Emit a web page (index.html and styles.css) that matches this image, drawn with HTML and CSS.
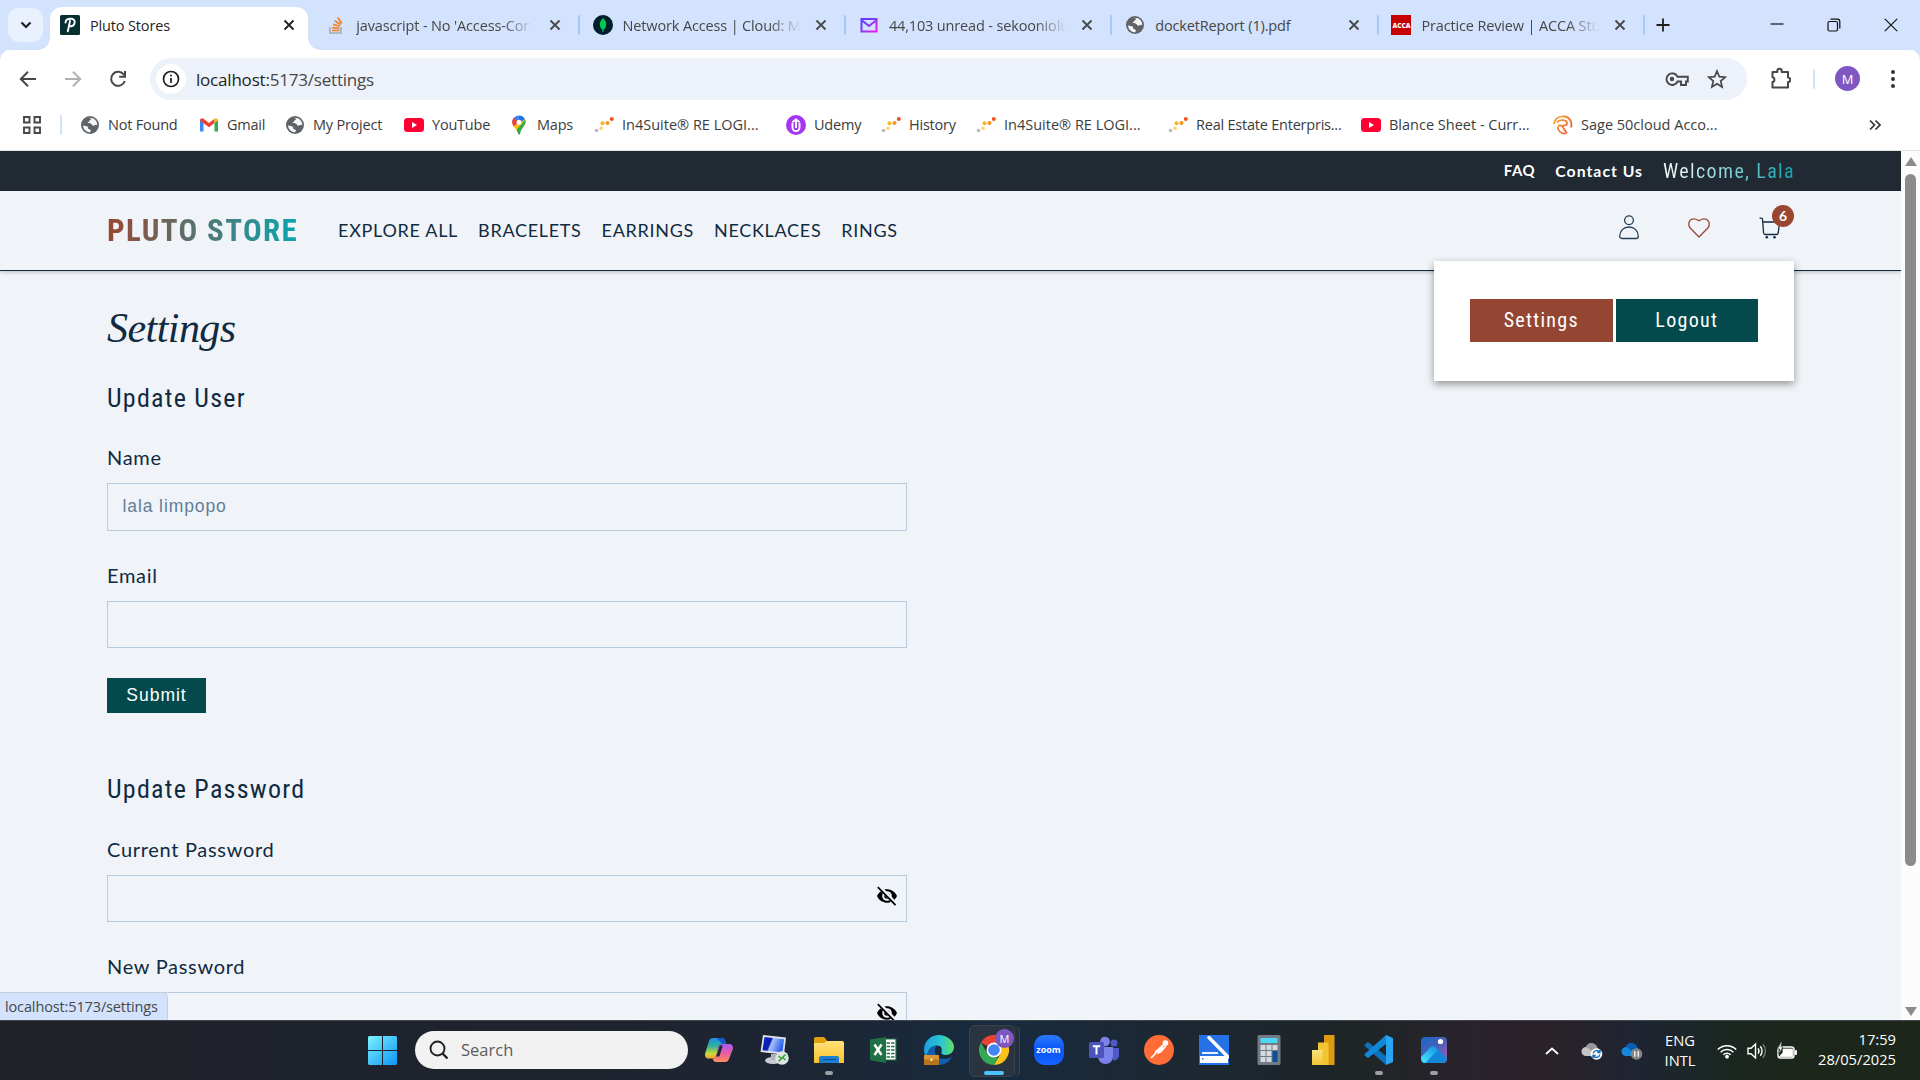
FILE: index.html
```html
<!DOCTYPE html>
<html lang="en">
<head>
<meta charset="utf-8">
<title>Pluto Stores</title>
<link rel="stylesheet" href="styles.css">
</head>
<body>
<svg class="sprite" aria-hidden="true">
  <defs>
    <linearGradient id="g-win" x1="0" y1="0" x2="1" y2="1"><stop offset="0" stop-color="#7cf2ff"/><stop offset="1" stop-color="#0c96f5"/></linearGradient>
    <linearGradient id="g-mail" x1="0" y1="0" x2="1" y2="1"><stop offset="0.3" stop-color="#6a3cff"/><stop offset="1" stop-color="#f01be8"/></linearGradient>
    <linearGradient id="g-sage" x1="0" y1="0" x2="1" y2="1"><stop offset="0" stop-color="#f8b13c"/><stop offset="1" stop-color="#e8502c"/></linearGradient>
    <linearGradient id="g-cop1" x1="0" y1="0" x2="0" y2="1"><stop offset="0" stop-color="#1c8fe8"/><stop offset=".4" stop-color="#2fb39a"/><stop offset=".75" stop-color="#c8d83a"/><stop offset="1" stop-color="#f8a22c"/></linearGradient>
    <linearGradient id="g-cop2" x1="0" y1="0" x2="0" y2="1"><stop offset="0" stop-color="#a45cf0"/><stop offset=".5" stop-color="#e85aa8"/><stop offset="1" stop-color="#ff9058"/></linearGradient>
    <linearGradient id="g-mon" x1="0" y1="0" x2="1" y2=".3"><stop offset="0" stop-color="#0a24c8"/><stop offset=".42" stop-color="#0a1fb0"/><stop offset=".5" stop-color="#a9c2ff"/><stop offset="1" stop-color="#2f62e8"/></linearGradient>
    <linearGradient id="g-fold" x1="0" y1="0" x2="0" y2="1"><stop offset="0" stop-color="#ffe27a"/><stop offset="1" stop-color="#fbc02d"/></linearGradient>
    <linearGradient id="g-edge" x1="0" y1="0" x2="1" y2="0"><stop offset="0" stop-color="#1b9de2"/><stop offset=".6" stop-color="#2fc8d0"/><stop offset="1" stop-color="#63e05a"/></linearGradient>
    <linearGradient id="g-zoom" x1="0" y1="0" x2="0" y2="1"><stop offset="0" stop-color="#2b7bff"/><stop offset=".5" stop-color="#0b53f5"/><stop offset="1" stop-color="#1565ff"/></linearGradient>
    <linearGradient id="g-pbi" x1="0" y1="0" x2="0" y2="1"><stop offset="0" stop-color="#f7e27c"/><stop offset="1" stop-color="#f2c531"/></linearGradient>
    <linearGradient id="g-photo" x1="0" y1="0" x2="1" y2="1"><stop offset="0" stop-color="#1668c4"/><stop offset=".5" stop-color="#4a5fb8"/><stop offset="1" stop-color="#b05ab8"/></linearGradient>
    <linearGradient id="g-hill" x1="0" y1="1" x2="1" y2="0"><stop offset="0" stop-color="#4be8ff"/><stop offset="1" stop-color="#1290e0"/></linearGradient>
    <symbol id="globe" viewBox="0 0 20 20"><circle cx="10" cy="10" r="9" fill="#5f6368"/><path d="M3 10.5c2 .2 3.6.4 4.800 1.300 .8.7 0 1.500.7 2.200.9.6 2.300.5 2.400 1.600 0 .8-.8 1.200-1 2A7.400 7.400 0 0 1 3 10.500zM8.500 2.800c1 .6 2.600.3 2.500 1.500-.2 1-1.800.7-1.900 1.900 0 1-1.500.6-1.400 1.700.2.900 2.300.3 3.300.8 1.200.6 1 2 2.400 2.100 1.200 0 1.300-1.100 2.500-1 .7 0 1 .4 1.400.6C17.600 6 14 2.300 8.500 2.800z" fill="#f4f6fa"/></symbol>
    <symbol id="dots" viewBox="0 0 20 20"><circle cx="2.500" cy="15.500" r="1.800" fill="#b4b8c8"/><circle cx="7" cy="13.200" r="1.800" fill="#fbd56a"/><circle cx="8.500" cy="8.200" r="2" fill="#f9b51e"/><circle cx="13.500" cy="8" r="2" fill="#f7931e"/><circle cx="17.800" cy="4" r="2" fill="#f4511e"/></symbol>
    <symbol id="youtube" viewBox="0 0 20 20"><rect x="0" y="3" width="20" height="14" rx="3.500" fill="#ff0033"/><path d="M8 7l5 3-5 3z" fill="#fff"/></symbol>
    <symbol id="x" viewBox="0 0 12 12"><path d="M1.500 1.500l9 9M10.500 1.500l-9 9" fill="none" stroke="currentColor" stroke-width="1.800"/></symbol>
    <symbol id="eye-off" viewBox="0 0 22 20"><path d="M1 10C3 5.500 7 3.200 11 3.200S19 5.500 21 10c-2 4.500-6 6.800-10 6.800S3 14.500 1 10z" fill="#000"/><circle cx="11" cy="10" r="4.800" fill="#f0f4f8"/><circle cx="11" cy="10" r="2.800" fill="#000"/><path d="M3.200.800l17 17.500" stroke="#f0f4f8" stroke-width="4"/><path d="M1.800 1.200l17.800 18" stroke="#000" stroke-width="1.700"/></symbol>
  </defs>
</svg>

<div class="screen">
  <header class="tabstrip">
    <button class="tab-search"><svg width="12" height="8" viewBox="0 0 12 8"><path d="M1.500 1.500L6 6l4.500-4.500" fill="none" stroke="#1f1f1f" stroke-width="2.200"/></svg></button>
    <div class="tab active">
      <svg class="fav" viewBox="0 0 20 20"><rect width="20" height="20" rx="1.500" fill="#06302f"/><path d="M5.500 7.500C5.500 4.500 8.500 3.600 11 3.800c3 .2 4.200 2 3.500 4.400C13.800 10.600 11.500 11.700 8.800 11M10 6L7.800 16.200" fill="none" stroke="#fff" stroke-width="1.900" stroke-linecap="round"/></svg>
      <span class="title">Pluto Stores</span><svg class="close"><use href="#x"/></svg>
    </div>
    <div class="tab">
      <svg class="fav" viewBox="0 0 20 20"><path d="M4 12v6h11v-6" fill="none" stroke="#a9adb3" stroke-width="1.600"/><path d="M6 15.500h7.500M6.200 12.600l7.300.9M7 9.300l6.900 2.200M8.800 5.800l5.900 3.900M11.800 2.500l4 6" stroke="#f48024" stroke-width="1.700"/></svg>
      <span class="title fade">javascript - No 'Access-Cor</span><svg class="close"><use href="#x"/></svg><i class="sep"></i>
    </div>
    <div class="tab">
      <svg class="fav" viewBox="0 0 20 20"><circle cx="10" cy="10" r="10" fill="#001e2b"/><path d="M10 3c2.600 2.500 3.400 4.500 3.200 7-.2 2.400-1.400 3.800-2.700 5v2h-1v-2c-1.300-1.200-2.500-2.600-2.700-5C6.600 7.500 7.600 5.500 10 3z" fill="#00c853"/></svg>
      <span class="title fade">Network Access | Cloud: Mo</span><svg class="close"><use href="#x"/></svg><i class="sep"></i>
    </div>
    <div class="tab">
      <svg class="fav" viewBox="0 0 20 20"><path d="M2.500 4h15v12.500h-15z M3 5.500l7 5.500 7-5.500" fill="none" stroke="url(#g-mail)" stroke-width="2"/></svg>
      <span class="title fade">44,103 unread - sekooniolu</span><svg class="close"><use href="#x"/></svg><i class="sep"></i>
    </div>
    <div class="tab">
      <svg class="fav"><use href="#globe"/></svg>
      <span class="title">docketReport (1).pdf</span><svg class="close"><use href="#x"/></svg><i class="sep"></i>
    </div>
    <div class="tab">
      <span class="fav acca">ACCA</span>
      <span class="title fade">Practice Review | ACCA Stu</span><svg class="close"><use href="#x"/></svg><i class="sep"></i>
    </div>
    <svg class="newtab" width="14" height="14" viewBox="0 0 14 14"><path d="M7 .5v13M.5 7h13" stroke="#1f1f1f" stroke-width="1.800"/></svg>
    <div class="winctl">
      <svg width="14" height="14" viewBox="0 0 14 14"><path d="M.5 6h13" stroke="#111" stroke-width="1.200"/></svg>
      <svg width="14" height="14" viewBox="0 0 14 14"><rect x="1" y="3.500" width="9.500" height="9.500" rx="1.500" fill="none" stroke="#111" stroke-width="1.200"/><path d="M3.500 1.200h7a2.300 2.300 0 0 1 2.300 2.300v7" fill="none" stroke="#111" stroke-width="1.200"/></svg>
      <svg width="14" height="14" viewBox="0 0 14 14"><path d="M.8.800l12.400 12.400M13.200.800L.8 13.200" stroke="#111" stroke-width="1.200"/></svg>
    </div>
  </header>

  <div class="toolbar">
    <svg class="nav-ic" viewBox="0 0 18 18"><path d="M17 9H2M9 1.800L1.800 9 9 16.200" fill="none" stroke="#474747" stroke-width="2"/></svg>
    <svg class="nav-ic" viewBox="0 0 18 18"><path d="M1 9h15M9 1.800L16.200 9 9 16.200" fill="none" stroke="#b1b1b1" stroke-width="2"/></svg>
    <svg class="nav-ic reload" viewBox="0 0 18 18"><path d="M15 5A7 7 0 1 0 15.800 11M16 1v5.800h-5.800" fill="none" stroke="#474747" stroke-width="2"/></svg>
    <div class="omnibox">
      <span class="info"><svg width="18" height="18" viewBox="0 0 18 18"><circle cx="9" cy="9" r="7.500" fill="none" stroke="#1f1f1f" stroke-width="1.700"/><path d="M9 8v5M9 4.800v1.800" stroke="#1f1f1f" stroke-width="1.700"/></svg></span>
      <span class="url"><b>localhost:</b>5173/settings</span>
      <svg class="key" width="24" height="16" viewBox="0 0 24 16"><path d="M12.600 5.800A5.800 5.800 0 1 0 12.600 10.500H16v3.500h5v-3.500h1.800V5.800z" fill="none" stroke="#474747" stroke-width="1.900"/><circle cx="7" cy="8" r="2.200" fill="#474747"/></svg>
      <svg class="star" width="20" height="20" viewBox="0 0 20 20"><path d="M10 2l2.300 5.600 6 .5-4.600 3.900 1.400 5.900L10 14.800 4.900 17.900l1.400-5.900L1.700 8.100l6-.5z" fill="none" stroke="#474747" stroke-width="1.700"/></svg>
    </div>
    <svg class="ext" width="20" height="22" viewBox="0 0 20 22"><path d="M1.500 5h4.800V4a2 2 0 0 1 4.400 0v1H17v5.500a2.300 2.300 0 0 1 0 4.600v5.400H1.500V15a2.400 2.400 0 0 0 0-4.700z" fill="none" stroke="#474747" stroke-width="2" stroke-linejoin="round"/></svg>
    <i class="vsep"></i>
    <span class="avatar">M</span>
    <svg class="kebab" width="6" height="20" viewBox="0 0 6 20"><g fill="#333"><circle cx="3" cy="3" r="2"/><circle cx="3" cy="10" r="2"/><circle cx="3" cy="17" r="2"/></g></svg>
  </div>

  <nav class="bookmarks">
    <svg class="apps" width="18" height="18" viewBox="0 0 18 18"><path d="M1 1h5.500v5.500H1zM11.500 1H17v5.500h-5.500zM1 11.500h5.500V17H1zM11.500 11.500H17V17h-5.500z" fill="none" stroke="#474747" stroke-width="1.900"/></svg>
    <i class="vsep"></i>
    <div class="marks">
      <a><svg><use href="#globe"/></svg><span>Not Found</span></a>
      <a><svg viewBox="0 0 20 20"><path d="M1 16.500V5l3.500 2.500v9z" fill="#4285f4"/><path d="M19 16.500V5l-3.500 2.500v9z" fill="#34a853"/><path d="M1 5.500C1 3 3.500 2.800 4.500 3.800L10 8l5.500-4.200V8L10 12.300 1 5.800z" fill="#ea4335"/><path d="M15.500 3.800C17 2.600 19 3.500 19 5.500L15.500 8.200z" fill="#fbbc04"/></svg><span>Gmail</span></a>
      <a><svg><use href="#globe"/></svg><span>My Project</span></a>
      <a><svg><use href="#youtube"/></svg><span>YouTube</span></a>
      <a><svg viewBox="0 0 20 20"><path d="M3.200 7.500A6.800 6.800 0 0 1 10 .5v7z" fill="#4285f4"/><path d="M3.200 7.500C3.200 5.500 4 3.800 5 2.800L10 7.500 4.600 11.500C3.700 10.200 3.200 9 3.200 7.500z" fill="#ea4335"/><path d="M10 .5a6.800 6.800 0 0 1 6 3.800L10 9z" fill="#1a73e8"/><path d="M4.600 11.500L16 4.200c2 5-2 7.300-3.800 10.500L8.400 16C7.200 14 5.600 13 4.600 11.500z" fill="#fbbc04"/><path d="M16.200 4.600c1.900 5.400-4 8-5 13.900-.4 1.500-2 1.500-2.300 0C8.700 17 8 16 7.500 15z" fill="#34a853"/><circle cx="10" cy="7.300" r="2.500" fill="#fff"/></svg><span>Maps</span></a>
      <a class="wide"><svg><use href="#dots"/></svg><span>In4Suite® RE LOGI...</span></a>
      <a><svg viewBox="0 0 20 20"><circle cx="10" cy="10" r="10" fill="#a435f0"/><path d="M6.500 8v4.500a3.500 3.500 0 0 0 7 0V8M6.300 7.300L10 4.500l3.700 2.800M10 6v7" fill="none" stroke="#fff" stroke-width="1.900"/></svg><span>Udemy</span></a>
      <a><svg><use href="#dots"/></svg><span>History</span></a>
      <a class="wide"><svg><use href="#dots"/></svg><span>In4Suite® RE LOGI...</span></a>
      <a><svg><use href="#dots"/></svg><span>Real Estate Enterpris...</span></a>
      <a class="wide"><svg><use href="#youtube"/></svg><span>Blance Sheet - Curr...</span></a>
      <a class="wide"><svg viewBox="0 0 20 20"><path d="M1 9C1.500 3.500 7 .5 12 1.500c5 1 7.500 6 6 11M4 7.500C6 4.500 13.500 4 14 8c.2 3.500-6 2.500-9 2.500M9 11l5 7.500M4.500 11.500C5 16 8 18.500 12.500 18.800" fill="none" stroke="url(#g-sage)" stroke-width="1.800"/></svg><span>Sage 50cloud Acco...</span></a>
    </div>
    <svg class="more" width="12" height="12" viewBox="0 0 12 12"><path d="M1 1.500L5.500 6 1 10.500M6.500 1.500L11 6l-4.500 4.500" fill="none" stroke="#333" stroke-width="1.700"/></svg>
  </nav>

  <div class="viewport">
    <div class="page">
      <div class="topbar">
        <a class="link faq">FAQ</a><a class="link">Contact Us</a><span class="welcome">Welcome, Lala</span>
      </div>
      <div class="site-head">
        <span class="logo">PLUTO STORE</span>
        <nav class="menu"><a>EXPLORE ALL</a><a>BRACELETS</a><a>EARRINGS</a><a>NECKLACES</a><a>RINGS</a></nav>
        <div class="actions">
          <svg width="20" height="25" viewBox="0 0 20 25"><circle cx="10" cy="5.300" r="4.400" fill="none" stroke="#243b53" stroke-width="1.300"/><path d="M3 23.500c-1.300 0-2.300-.9-2.300-2.200C.8 16 4.500 12 10 12s9.200 4 9.300 9.300c0 1.300-1 2.200-2.300 2.200z" fill="none" stroke="#243b53" stroke-width="1.300"/></svg>
          <svg width="22" height="20" viewBox="0 0 22 20"><path d="M11 19L2.400 10.200C-.6 6.800.8 1 5.800.8 8.500.6 10 2.300 11 2.800 12 2.300 13.500.6 16.200.8c5 .2 6.400 6 3.400 9.400z" fill="none" stroke="#994733" stroke-width="1.300"/></svg>
          <div class="cart">
            <svg width="22" height="22" viewBox="0 0 22 22"><path d="M.5 1.200h1.700c.9 0 1.200.4 1.300 1.200L4.600 16c.1 1 .7 1.500 1.600 1.500h11.300c.9 0 1.500-.5 1.700-1.400L20.600 5H3.800" fill="none" stroke="#102a42" stroke-width="1.300"/><circle cx="7.800" cy="20.300" r="1.300" fill="#102a42"/><circle cx="15.500" cy="20.300" r="1.300" fill="#102a42"/></svg>
            <span class="badge">6</span>
          </div>
          <div class="dropdown"><button class="btn rust"><span>Settings</span></button><button class="btn teal"><span>Logout</span></button></div>
        </div>
      </div>
      <main class="content">
        <h1><span>Settings</span></h1>
        <h2 class="h-user"><span>Update User</span></h2>
        <form class="form user-form">
          <label>Name</label>
          <div class="field tall"><span class="ph">lala limpopo</span></div>
          <label>Email</label>
          <div class="field"></div>
          <button class="submit" type="button">Submit</button>
        </form>
        <h2 class="h-pass"><span>Update Password</span></h2>
        <form class="form">
          <label>Current Password</label>
          <div class="field"><svg class="eye"><use href="#eye-off"/></svg></div>
          <label>New Password</label>
          <div class="field"><svg class="eye"><use href="#eye-off"/></svg></div>
        </form>
      </main>
    </div>
    <div class="scroll"><i class="up"></i><i class="thumb"></i><i class="down"></i></div>
    <div class="status"><span>localhost:5173/settings</span></div>
  </div>

  <footer class="taskbar">
    <div class="tb-main">
      <svg class="start" width="29" height="29" viewBox="0 0 29 29"><path d="M1 0h13v14H0V1zM15 0h13l1 1v13H15zM0 15h14v14H1l-1-1zM15 15h14v13l-1 1H15z" fill="url(#g-win)"/></svg>
      <div class="tb-search"><svg width="20" height="20" viewBox="0 0 20 20"><circle cx="8.500" cy="8.500" r="7" fill="none" stroke="#222" stroke-width="1.900"/><path d="M13.500 13.500l5 5" stroke="#222" stroke-width="2.400"/></svg><span>Search</span></div>
      <div class="apps-row">
        <div class="app"><svg viewBox="0 0 30 30"><path d="M9 3h9c2 0 2.800 1.500 3.300 3.500L22 9h-4c-2 0-3 1-3.500 3l-2.300 8.500c-.6 2-1.600 3-3.500 3H4.500C1.500 23.500.5 21 1.300 18L5 6c.6-2 2-3 4-3z" fill="url(#g-cop1)"/><path d="M18 3c2 0 2.800 1.500 3.300 3.500L22 9h-4l-5-6z" fill="#1858c8"/><path d="M21 27h-9c-2 0-2.800-1.500-3.300-3.500 2 0 3-1 3.500-3l2.300-8.500c.6-2 1.600-3 3.500-3h7.500c3 0 4 2.500 3.200 5.500L25 24c-.6 2-2 3-4 3z" fill="url(#g-cop2)"/><path d="M15.800 10.500h3l-3.500 11h-3z" fill="#1e2431"/></svg></div>
        <div class="app"><svg viewBox="0 0 30 30"><ellipse cx="14" cy="25.500" rx="8" ry="3.500" fill="#c9ccd2"/><path d="M12 19h5v6h-5z" fill="#aeb2ba"/><path d="M4 0l23 2.500-2 17L1.500 17z" fill="#dfe2e8"/><path d="M5.500 2L25 4.200l-1.500 13.300L3.500 15.300z" fill="url(#g-mon)"/><circle cx="23" cy="23" r="6.800" fill="#dfe3e2"/><path d="M19.500 21l3 2.500-3 3M26.500 19.500l-3 3 3 2.500" fill="none" stroke="#2fa32f" stroke-width="1.500"/></svg></div>
        <div class="app run"><svg viewBox="0 0 30 30"><path d="M0 4c0-1.200.8-2 2-2h8l3 3.500V12H0z" fill="#e0a010"/><path d="M0 8h10l3-2h15c1.200 0 2 .8 2 2v20H1c-.6 0-1-.4-1-1z" fill="url(#g-fold)"/><path d="M5 28v-5c0-1.200.8-2 2-2h16c1.200 0 2 .8 2 2v5z" fill="#1b7fd0"/><path d="M8.500 24.500h13" stroke="#0b4f94" stroke-width="1.200"/></svg></div>
        <div class="app"><svg viewBox="0 0 30 30"><path d="M14 4h13v21H14z" fill="#fff" stroke="#1e7145" stroke-width="1.200"/><path d="M17.500 8h8M17.500 11.500h8M17.500 15h8M17.500 18.500h8M17.500 22h8" stroke="#1e7145" stroke-width="1.500"/><path d="M21.500 5v19" stroke="#fff"/><path d="M1 4.500L17 2v26L1 25.200z" fill="#1e7145"/><path d="M5.500 9.500l7 10.500M12.500 9.500L5.500 20" stroke="#fff" stroke-width="2.400"/></svg></div>
        <div class="app"><svg viewBox="0 0 30 30"><path d="M0 15C0 6 7 0 15 0s15 6 15 12c0 5-4 8-8.500 8-3 0-4.500-1-4-3 1-3 0-6.500-4.500-6.500C7 10.500 3 16 3 22 1 20 0 18 0 15z" fill="url(#g-edge)"/><path d="M3 22c0-6 4-11.500 10-11.500C8.500 15 11 24 20 24c3.500 0 6-1 8-2.500C25.500 27 20.500 30 15 30 9 30 4.500 27 3 22z" fill="#0f5fae"/><path d="M0 20h15v10H0z" fill="#b8741a"/><path d="M0 20h15v4.500H0z" fill="#d99434"/><path d="M6.500 23.500h2v2.500h-2z" fill="#fff0a0"/></svg></div>
        <div class="app chrome"><svg viewBox="0 0 30 30"><path d="M15 15L2 7.500A15 15 0 0 1 28 7.500H15z" fill="#ea4335"/><path d="M15 7.500H28A15 15 0 0 1 15 30l6.500-11.300z" fill="#fbc116"/><path d="M2 7.500L8.500 18.700 15 22.500h4.300L15 30A15 15 0 0 1 2 7.500z" fill="#34a853"/><circle cx="15" cy="15" r="7.500" fill="#fff"/><circle cx="15" cy="15" r="5.800" fill="#4285f4"/></svg><span class="m-badge">M</span></div>
        <div class="app"><svg viewBox="0 0 30 30"><rect width="30" height="30" rx="11" fill="url(#g-zoom)"/></svg><span class="zoom">zoom</span></div>
        <div class="app"><svg viewBox="0 0 30 30"><circle cx="25" cy="8" r="3.500" fill="#5059c9"/><path d="M22 13h8v7c0 4-3 5.500-6 5.500z" fill="#5059c9"/><circle cx="16" cy="6.500" r="4.800" fill="#7b83eb"/><path d="M9 12h15v9c0 5-3.500 8-7.500 8S9 26 9 21z" fill="#7b83eb"/><rect x="0" y="7" width="15" height="16" rx="1.500" fill="#4b53bc"/><path d="M3.800 11.300h7.400M7.500 11v8.500" stroke="#fff" stroke-width="2"/></svg></div>
        <div class="app"><svg viewBox="0 0 30 30"><circle cx="15" cy="15" r="15" fill="#ff6c37"/><circle cx="21.500" cy="8" r="2.800" fill="#fff"/><path d="M20 9.500l-8 7-1 2.500-4 4M19 12l-5 5M22 10.500l-5 6-4 2" stroke="#fff" stroke-width="1.700" fill="none"/></svg></div>
        <div class="app"><svg viewBox="0 0 30 30"><path d="M0 0h30v30H0z" fill="#2670e8"/><path d="M10 2.500L29 22" stroke="#fff" stroke-width="3.400" stroke-linecap="round"/><path d="M3 18h16" stroke="#fff" stroke-width="1.800"/><path d="M1 21h28v7H1z" fill="#fff"/><path d="M3 23h1.500v1.500H3z" fill="#2670e8"/></svg></div>
        <div class="app"><svg viewBox="0 0 30 30"><rect x="3.500" width="23" height="30" rx="1.500" fill="#737b85"/><path d="M6.500 3h17v5h-17z" fill="#4cd8f5"/><path d="M6.500 10h5v5h-5zM12.500 10h5v5h-5zM18.500 10h5v5h-5zM6.500 16h5v5h-5zM12.500 16h5v5h-5zM6.500 22h5v5h-5zM12.500 22h5v5h-5z" fill="#d6dade"/><path d="M18.500 16h5v11h-5z" fill="#0d4f94"/></svg></div>
        <div class="app"><svg viewBox="0 0 30 30"><path d="M15 0h10.500v30H15z" fill="#dc9b10"/><path d="M9 7.500h10.500V30H9z" fill="#f2c531"/><path d="M3 15h10.500v15H3z" fill="url(#g-pbi)"/></svg></div>
        <div class="app run"><svg viewBox="0 0 30 30"><path d="M22 0l7 3v24l-7 3z" fill="#29a5f2"/><path d="M2 8.500l2-1.500L22 21v9L1 11.200c-.8-.8-.8-1.800 1-2.700z" fill="#0b72bd"/><path d="M2 21.500L4 23l18-14V0L1 18.800c-.8.800-.8 1.800 1 2.700z" fill="#1288d8"/></svg></div>
        <div class="app run"><svg viewBox="0 0 30 30"><rect x="2" y="2" width="26" height="26" rx="4" fill="url(#g-photo)"/><path d="M2 22l9.500-9.500c1.700-1.700 3.800-1.700 5.500 0L28 23c0 3-1.800 5-4 5H6c-2.400 0-4-2-4-6z" fill="#1487d8"/><path d="M2 22l9.500-9.500c1.700-1.700 3.800-1.700 5.500 0L19 14.500 6.500 28C3.800 28 2 26 2 22z" fill="url(#g-hill)"/><circle cx="21.500" cy="6.500" r="2.600" fill="#fff"/></svg></div>
      </div>
    </div>
    <div class="tray">
      <svg width="14" height="8" viewBox="0 0 14 8"><path d="M1 7l6-5.500L13 7" fill="none" stroke="#fff" stroke-width="1.700"/></svg>
      <svg class="c1" width="22" height="18" viewBox="0 0 22 18"><path d="M5 14a4.500 4.500 0 0 1 0-9C6 2 9 .500 12 1.500c2.500.8 4 2.500 4.500 5 2 .5 3 2 3 4 0 2.200-1.500 3.500-3.500 3.500z" fill="#c4c4c6"/><path d="M5 5c1-3 4-4.500 7-3.500 2.500.8 4 2.500 4.500 5L11 9z" fill="#98989c"/><circle cx="15.500" cy="12" r="5.800" fill="#fff"/><path d="M12.200 11.500a3.500 3.500 0 0 1 6.300-1.500M18.800 12.500a3.500 3.500 0 0 1-6.300 1.500M19 7.800v2.700h-2.700M12 16.200v-2.700h2.700" fill="none" stroke="#0f6cbd" stroke-width="1.400"/></svg>
      <svg class="c2" width="22" height="18" viewBox="0 0 22 18"><path d="M5 14a4.500 4.500 0 0 1 0-9C6 2 9 .500 12 1.500c2.500.8 4 2.500 4.500 5 2 .5 3 2 3 4 0 2.200-1.500 3.500-3.500 3.500z" fill="#1687dc"/><path d="M5 5c1-3 4-4.500 7-3.500 2.500.8 4 2.500 4.500 5L11 9z" fill="#0a5fb4"/><circle cx="15.500" cy="12" r="5.800" fill="#858585"/><path d="M13.800 9.300v5.400M17.200 9.300v5.400" stroke="#fff" stroke-width="1.300"/></svg>
      <div class="lang"><span>ENG</span><span>INTL</span></div>
      <svg class="wifi" width="20" height="16" viewBox="0 0 20 16"><g fill="none" stroke="#fff" stroke-width="1.500"><path d="M.8 6.500a13 13 0 0 1 18.400 0M3.600 9.200a9 9 0 0 1 12.800 0M6.300 11.800a5.200 5.200 0 0 1 7.400 0"/></g><circle cx="10" cy="13.700" r="1.900" fill="#fff"/></svg>
      <svg class="vol" width="20" height="18" viewBox="0 0 20 18"><g fill="none" stroke="#fff" stroke-width="1.400"><path d="M1 6.200h3L8.500 2v14L4 11.800H1zM11 6.300c1.200 1.600 1.200 3.800 0 5.400M13.300 4.300c2.300 2.700 2.300 6.700 0 9.400"/><path d="M15.800 2.200c3.500 4 3.500 9.600 0 13.600" stroke="#777"/></g></svg>
      <svg class="bat" width="22" height="18" viewBox="0 0 22 18"><rect x="2" y="5" width="16" height="11" rx="2.500" fill="none" stroke="#fff" stroke-width="1.400"/><path d="M7 7h9.500v7.500h-13l3.500-4zM19 8.500h1.500v4H19z" fill="#fff" stroke="#fff" stroke-width=".8"/><path d="M5 0L1.500 7h2.300L2.800 12 7 5H4.800L6 0z" fill="#fff" stroke="#1d2822" stroke-width=".6"/></svg>
      <div class="clock"><span>17:59</span><span>28/05/2025</span></div>
    </div>
  </footer>
</div>
</body>
</html>
```
FILE: styles.css
```css
* { box-sizing: border-box; }
body { margin: 0; overflow: hidden; background: #fff; }
button { border: 0; padding: 0; margin: 0; font: inherit; color: inherit; background: none; }
.sprite { position: absolute; width: 0; height: 0; }
svg { display: block; flex: none; }

.screen {
  width: 1920px; height: 1080px; display: flex; flex-direction: column;
  font-family: "Open Sans", "Noto Sans", sans-serif; overflow: hidden;
  background: linear-gradient(#d3e2fd 60px, #fff 60px);
}

/* browser tabs */
.tabstrip { height: 50px; flex: none; background: #d3e2fd; display: flex; align-items: center; padding-left: 8px; }
.tab-search { width: 35px; height: 34px; border-radius: 11px; background: #e9f1fe; display: flex; align-items: center; justify-content: center; margin-right: 7px; }
.tab { width: 266.300px; height: 50px; flex: none; display: flex; align-items: center; padding-left: 10px; position: relative; color: #474747; }
.tab.active { color: #1f1f1f; isolation: isolate; }
.tab.active::before { content: ""; position: absolute; z-index: -1; left: 0; top: 7px; width: 258px; height: 43px; background: #fff; border-radius: 12px 12px 0 0; }
.tab.active::after { content: ""; position: absolute; z-index: -1; left: -12px; bottom: 0; width: 282px; height: 12px;
  background: radial-gradient(circle at 0 0, transparent 11.500px, #fff 12px) left / 12px 12px no-repeat, radial-gradient(circle at 100% 0, transparent 11.500px, #fff 12px) right / 12px 12px no-repeat; }
.fav { width: 20px; height: 20px; flex: none; margin-right: 10px; }
.acca { background: #c60000; color: #fff; font-size: 6.500px; font-weight: 800; display: flex; align-items: center; justify-content: center; }
.title { width: 178px; font-size: 14.500px; letter-spacing: -0.150px; white-space: nowrap; overflow: hidden; }
.fade { -webkit-mask-image: linear-gradient(90deg, #000 82%, transparent); mask-image: linear-gradient(90deg, #000 82%, transparent); }
.close { width: 12px; height: 12px; margin-left: 14.500px; }
.sep { width: 2px; height: 20px; background: #a8c7fa; border-radius: 1px; margin-left: 17px; }
.newtab { margin-left: 8px; }
.winctl { margin-left: auto; display: flex; gap: 43px; padding-right: 22px; }

/* toolbar */
.toolbar { height: 50px; flex: none; display: flex; align-items: center; padding: 8px 24px 0 19px; background: #fff; border-radius: 10px 10px 0 0; }
.nav-ic { width: 18px; height: 18px; margin-right: 27px; }
.nav-ic.reload { margin-right: 23px; }
.omnibox { width: 1597px; height: 42px; border-radius: 21px; background: #ecf1fa; display: flex; align-items: center; padding: 0 20px 0 6px; }
.info { width: 30px; height: 30px; border-radius: 50%; background: #fff; display: flex; align-items: center; justify-content: center; margin-right: 10px; }
.url { font-size: 17px; letter-spacing: -0.200px; color: #474747; }
.url b { font-weight: 400; color: #1f1f1f; }
.key { margin-left: auto; }
.star { margin-left: 18px; }
.ext { margin-left: 24px; margin-bottom: 2px; }
.vsep { width: 2px; height: 20px; background: #d3e2fd; border-radius: 1px; flex: none; }
.toolbar .vsep { margin-left: 22px; }
.avatar { width: 25px; height: 25px; border-radius: 50%; background: #7e57c2; color: #fff; font-size: 13px; display: flex; align-items: center; justify-content: center; margin-left: 20px; margin-bottom: 1px; }
.kebab { margin-left: auto; margin-bottom: 1px; }

/* bookmarks */
.bookmarks { height: 51px; flex: none; background: #fff; border-bottom: 1px solid #dfe3e2; display: flex; align-items: center; padding: 0 39px 0 23px; }
.bookmarks .vsep { margin: 0 18px 0 19px; }
.marks { display: grid; grid-template-columns: 119px 86px 119px 105px 85px 192px 95px 95px 192px 193px 192px 180px; }
.marks a { display: flex; align-items: center; gap: 8px; font-size: 14.500px; letter-spacing: -0.220px; color: #3c3c3c; white-space: nowrap; }
.marks .wide { letter-spacing: 0; }
.marks span { margin-top: -2px; }
.marks svg { width: 20px; height: 20px; }
.more { margin-left: auto; }

/* page */
.viewport { flex: 1; min-height: 0; display: flex; position: relative; overflow: hidden; }
.page { width: 1901px; background: #f0f4f8; overflow: hidden; color: #102a42; letter-spacing: 0.700px; }
.topbar { height: 40px; background: #212933; display: flex; align-items: center; justify-content: flex-end; padding-right: 106px; color: #fff; }
.link { font: 700 15.800px Lato, sans-serif; letter-spacing: 1px; margin: -2px 20px 0 0; }
.faq { font-size: 15px; letter-spacing: 0.600px; }
.welcome { font: 400 20px Roboto, sans-serif; font-stretch: 75%; letter-spacing: 1.350px; background: linear-gradient(90deg, #fff, #0ba5b0); -webkit-background-clip: text; background-clip: text; color: transparent; }
.site-head { height: 80px; display: flex; align-items: center; padding: 0 107px; border-bottom: 1px solid #102a42; box-shadow: 0 1px 4px rgba(0,0,0,.25); }
.logo { font: 700 31px Roboto, sans-serif; font-stretch: 75%; letter-spacing: 1.350px; background: linear-gradient(90deg, #994733, #0ba5b0); -webkit-background-clip: text; background-clip: text; color: transparent; }
.menu { display: flex; gap: 20px; margin: -2px 0 0 40px; font: 400 18px Lato, sans-serif; }
.actions { margin-left: auto; display: flex; align-items: center; position: relative; gap: 49px; padding-right: 13px; margin-bottom: 6px; }
.cart { position: relative; }
.badge { position: absolute; left: 13px; top: -12px; width: 22px; height: 22px; border-radius: 50%; background: #994733; color: #fff; font: 700 14px/22px Lato, sans-serif; letter-spacing: 0; text-align: center; }
.dropdown { position: absolute; z-index: 2; right: 0; top: 46px; width: 360px; height: 120px; background: #fff; box-shadow: 0 3px 8px rgba(0,0,0,.4); display: flex; align-items: flex-start; justify-content: center; gap: 3px; padding-top: 38px; }
.btn { width: 142.500px; height: 43px; padding-bottom: 2px; color: #fff; font: 450 20px Roboto, sans-serif; font-stretch: 75%; letter-spacing: 1.300px; }
.rust { background: #944633; }
.teal { background: #044a4c; }

.content { padding: 32px 107px 0; }
h1, h2 { margin: 0; font-weight: 400; }
h1 { font: italic 400 42px/50px "Liberation Serif", serif; letter-spacing: -0.550px; }
h2 { font: 400 26px/32px Roboto, sans-serif; font-stretch: 75%; letter-spacing: 1.250px; }
.h-user { margin-top: 29px; }
.h-pass { margin-top: 60px; }
.form { width: 800px; }
label { display: block; font: 400 20px/24px Lato, sans-serif; margin: 32px 0 14px; }
.user-form label:first-child { margin-top: 31px; }
.field { height: 47px; border: 1px solid #b8cadc; display: flex; align-items: center; padding: 0 8px 0 14.500px; }
.field.tall { height: 48px; padding-bottom: 1px; }
.ph { font: 17.500px "Liberation Sans", sans-serif; letter-spacing: 0.900px; color: #627d98; }
.submit { display: block; width: 99px; height: 35px; margin-top: 30px; background: #044a4c; color: #fff; font: 17.500px "Liberation Sans", sans-serif; letter-spacing: 1px; }
.eye { width: 22px; height: 20px; margin-left: auto; margin-bottom: 5px; }

.scroll { width: 19px; background: #fcfcfc; display: flex; flex-direction: column; align-items: center; padding: 6px 0 4px; }
.up { border: 6px solid transparent; border-top: 0; border-bottom: 9px solid #8b8b8b; }
.down { border: 6px solid transparent; border-bottom: 0; border-top: 9px solid #8b8b8b; margin-top: auto; }
.thumb { width: 11px; height: 692px; margin-top: 8px; border-radius: 6px; background: #8b8b8b; }
.status { position: absolute; left: 0; bottom: 0; width: 168px; height: 28px; background: #d3e3fd; border: 1px solid #c4cedd; border-left: 0; border-bottom: 0; border-radius: 0 6px 0 0; padding-left: 5px; font-size: 14.500px; line-height: 27px; letter-spacing: -0.130px; color: #474747; white-space: nowrap; }

/* taskbar */
.taskbar { height: 60px; flex: none; display: flex; justify-content: space-between; align-items: center; border-top: 1px solid #41474d; color: #fff;
  background: linear-gradient(90deg, #212228 0, #1e222b 300px, #1e2430 700px, #182a3e 1000px, #1c2834 1150px, #1e2527 1350px, #2a232c 1480px, #292229 1560px, #1e2532 1640px, #1c2622 1720px, #1c261b 1800px); }
.tb-main { display: flex; align-items: center; padding-left: 368px; margin-bottom: 1px; }
.tb-search { width: 273px; height: 38px; margin-left: 18px; border-radius: 19px; background: #f2f2f2; display: flex; align-items: center; gap: 12px; padding: 0 0 1px 14px; font-size: 16.500px; color: #5d5d5d; }
.apps-row { display: flex; margin-left: 3px; }
.app { width: 55px; height: 59px; display: flex; align-items: center; justify-content: center; position: relative; }
.app > svg { width: 30px; height: 30px; }
.run::after, .chrome::after { content: ""; position: absolute; bottom: 5px; width: 8px; height: 4px; border-radius: 2px; background: #9b9ea3; }
.chrome::after { width: 20px; background: #4cc2ff; }
.chrome { isolation: isolate; }
.chrome::before { content: ""; position: absolute; z-index: -1; left: 3px; top: 4px; width: 44px; height: 50px; border-radius: 5px; background: #2a3440; border: 1px solid #38424d; box-shadow: 5px 0 0 -1px #26303c, 6px 0 0 -1px #38424d; }
.m-badge { position: absolute; left: 29px; top: 8px; width: 19px; height: 19px; border-radius: 50%; background: #7e57c2; font-size: 11px; line-height: 19px; text-align: center; }
.zoom { position: absolute; width: 30px; text-align: center; font: 700 9px/28px "Open Sans", sans-serif; }
.tray { display: flex; align-items: center; padding-right: 24px; font-size: 14.700px; line-height: 20px; }
.c1 { margin-left: 22px; }
.c2 { margin-left: 18px; }
.lang { width: 40px; margin: -2px 0 0 17px; display: flex; flex-direction: column; align-items: center; }
.wifi { margin-left: 17px; }
.vol { margin-left: 10px; }
.bat { margin-left: 9px; }
.clock { width: 90px; margin: -3px 0 0 8px; display: flex; flex-direction: column; align-items: flex-end; }
```
